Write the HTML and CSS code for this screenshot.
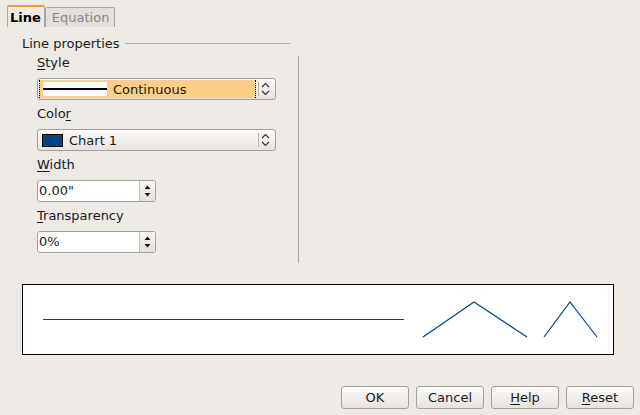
FILE: index.html
```html
<!DOCTYPE html>
<html lang="en">
<head>
    <meta charset="UTF-8">
    <title>Line Properties</title>
    <link rel="stylesheet" href="styles.css">
</head>
<body>
    <div class="tabs">
        <div class="tab active">Line</div>
        <div class="tab">Equation</div>
    </div>

    <div class="panel">
        <div class="group-title">
            <span>Line properties</span>
            <div class="rule"></div>
        </div>

        <div class="group-body">
            <div class="fields">
                <div class="label"><u>S</u>tyle</div>
                <div class="combo focused">
                    <div class="combo-value">
                        <span class="line-swatch"><span></span></span>
                        <span>Continuous</span>
                    </div>
                    <div class="combo-arrow">
                        <svg width="9" height="14" viewBox="0 0 9 14"><path d="M1 5 L4.5 1.5 L8 5 M1 9 L4.5 12.5 L8 9" fill="none" stroke="#333" stroke-width="1.2"/></svg>
                    </div>
                </div>

                <div class="label">Colo<u>r</u></div>
                <div class="combo">
                    <div class="combo-value">
                        <span class="color-swatch"></span>
                        <span>Chart 1</span>
                    </div>
                    <div class="combo-arrow">
                        <svg width="9" height="14" viewBox="0 0 9 14"><path d="M1 5 L4.5 1.5 L8 5 M1 9 L4.5 12.5 L8 9" fill="none" stroke="#333" stroke-width="1.2"/></svg>
                    </div>
                </div>

                <div class="label"><u>W</u>idth</div>
                <div class="spin">
                    <div class="spin-value">0.00"</div>
                    <div class="spin-buttons">
                        <svg width="7" height="14" viewBox="0 0 7 14"><path d="M0.5 5 L3.5 1.5 L6.5 5 Z M0.5 9 L3.5 12.5 L6.5 9 Z" fill="#111"/></svg>
                    </div>
                </div>

                <div class="label"><u>T</u>ransparency</div>
                <div class="spin">
                    <div class="spin-value">0%</div>
                    <div class="spin-buttons">
                        <svg width="7" height="14" viewBox="0 0 7 14"><path d="M0.5 5 L3.5 1.5 L6.5 5 Z M0.5 9 L3.5 12.5 L6.5 9 Z" fill="#111"/></svg>
                    </div>
                </div>
            </div>
            <div class="vsep"></div>
        </div>

        <div class="preview">
            <svg width="592" height="69" viewBox="0 0 592 69">
                <g fill="none" stroke="#004586" stroke-width="1.2">
                    <path d="M20 34.5 H381"/>
                    <path d="M400 52 L451 17 L504 52"/>
                    <path d="M521 52 L547 17 L574 52"/>
                </g>
            </svg>
        </div>
    </div>

    <div class="buttons">
        <button class="btn">OK</button>
        <button class="btn">Cancel</button>
        <button class="btn"><u>H</u>elp</button>
        <button class="btn"><u>R</u>eset</button>
    </div>
</body>
</html>
```

FILE: styles.css
```css
body {
    margin: 0;
    padding: 0;
    width: 640px;
    height: 415px;
    background-color: #edeae6;
    font-family: "DejaVu Sans", sans-serif;
    font-size: 13px;
    color: #1a1a1a;
    overflow: hidden;
}
u {
    text-decoration-thickness: 1px;
    text-underline-offset: 2px;
}
.tabs {
    display: flex;
    align-items: flex-end;
    padding: 5px 0 0 7px;
    height: 22px;
}
.tab {
    height: 19px;
    line-height: 19px;
    padding: 0 5px 0 6px;
    border: 1px solid #aaa59f;
    border-bottom: none;
    border-radius: 2px 2px 0 0;
    background: #e3dfda;
    color: #8a8782;
}
.tab.active {
    height: 20px;
    line-height: 21px;
    padding: 0 3px 0 2px;
    background: #edeae6;
    color: #000;
    font-weight: bold;
    border-top: 2px solid #f09a3e;
}
.panel {
    padding: 0 0 0 22px;
}
.group-title {
    display: flex;
    align-items: center;
    margin-top: 8px;
    height: 16px;
    width: 268px;
}
.group-title .rule {
    flex: 1;
    height: 1px;
    background: #aca8a3;
    margin-left: 5px;
}
.group-body {
    display: flex;
    padding-left: 15px;
    margin-top: 4px;
}
.fields {
    width: 239px;
}
.label {
    height: 16px;
    line-height: 16px;
    margin: 0 0 7px 0;
}
.combo, .spin {
    display: flex;
    height: 20px;
    border: 1px solid #a29e98;
    border-radius: 3px;
    margin-bottom: 6px;
    background: linear-gradient(#fbfaf9, #e7e3df);
}
.combo-value {
    flex: 1;
    display: flex;
    align-items: center;
    gap: 6px;
    padding-left: 4px;
}
.combo.focused .combo-value {
    background: #fcce88;
    margin: 1px 0 1px 1px;
    padding-left: 3px;
    border-left: 1px dotted #000;
    border-right: 1px dotted #000;
}
.line-swatch {
    width: 64px;
    height: 14px;
    background: #fff;
    display: flex;
    align-items: center;
}
.line-swatch span {
    display: block;
    width: 100%;
    height: 2px;
    background: #000;
}
.color-swatch {
    width: 19px;
    height: 11px;
    background: #004586;
    border: 1px solid #000;
}
.combo-arrow {
    width: 19px;
    display: flex;
    align-items: center;
    justify-content: center;
    position: relative;
}
.combo-arrow::before {
    content: "";
    position: absolute;
    left: 2px;
    top: 3px;
    bottom: 3px;
    width: 1px;
    background: #b5b1ac;
}
.spin {
    width: 117px;
    background: #fff;
}
.spin-value {
    flex: 1;
    line-height: 20px;
    padding-left: 1px;
}
.spin-buttons {
    width: 15px;
    display: flex;
    align-items: center;
    justify-content: center;
    border-left: 1px solid #c2beb9;
    background: linear-gradient(#f8f7f5, #e4e0dc);
    border-radius: 0 2px 2px 0;
}
.vsep {
    width: 1px;
    height: 207px;
    background: #a9a5a0;
    margin-left: 22px;
    margin-top: 1px;
}
.preview {
    width: 590px;
    height: 69px;
    margin-top: 21px;
    border: 1px solid #000;
    background: #fff;
}
.preview svg {
    display: block;
}
.buttons {
    display: flex;
    justify-content: flex-end;
    gap: 7px;
    padding-right: 6px;
    margin-top: 31px;
}
.btn {
    width: 68px;
    height: 23px;
    border: 1px solid #a29e98;
    border-radius: 3px;
    background: linear-gradient(#fbfaf9, #e6e2de);
    font-family: "DejaVu Sans", sans-serif;
    font-size: 13px;
    color: #1a1a1a;
    padding: 0;
}
```
